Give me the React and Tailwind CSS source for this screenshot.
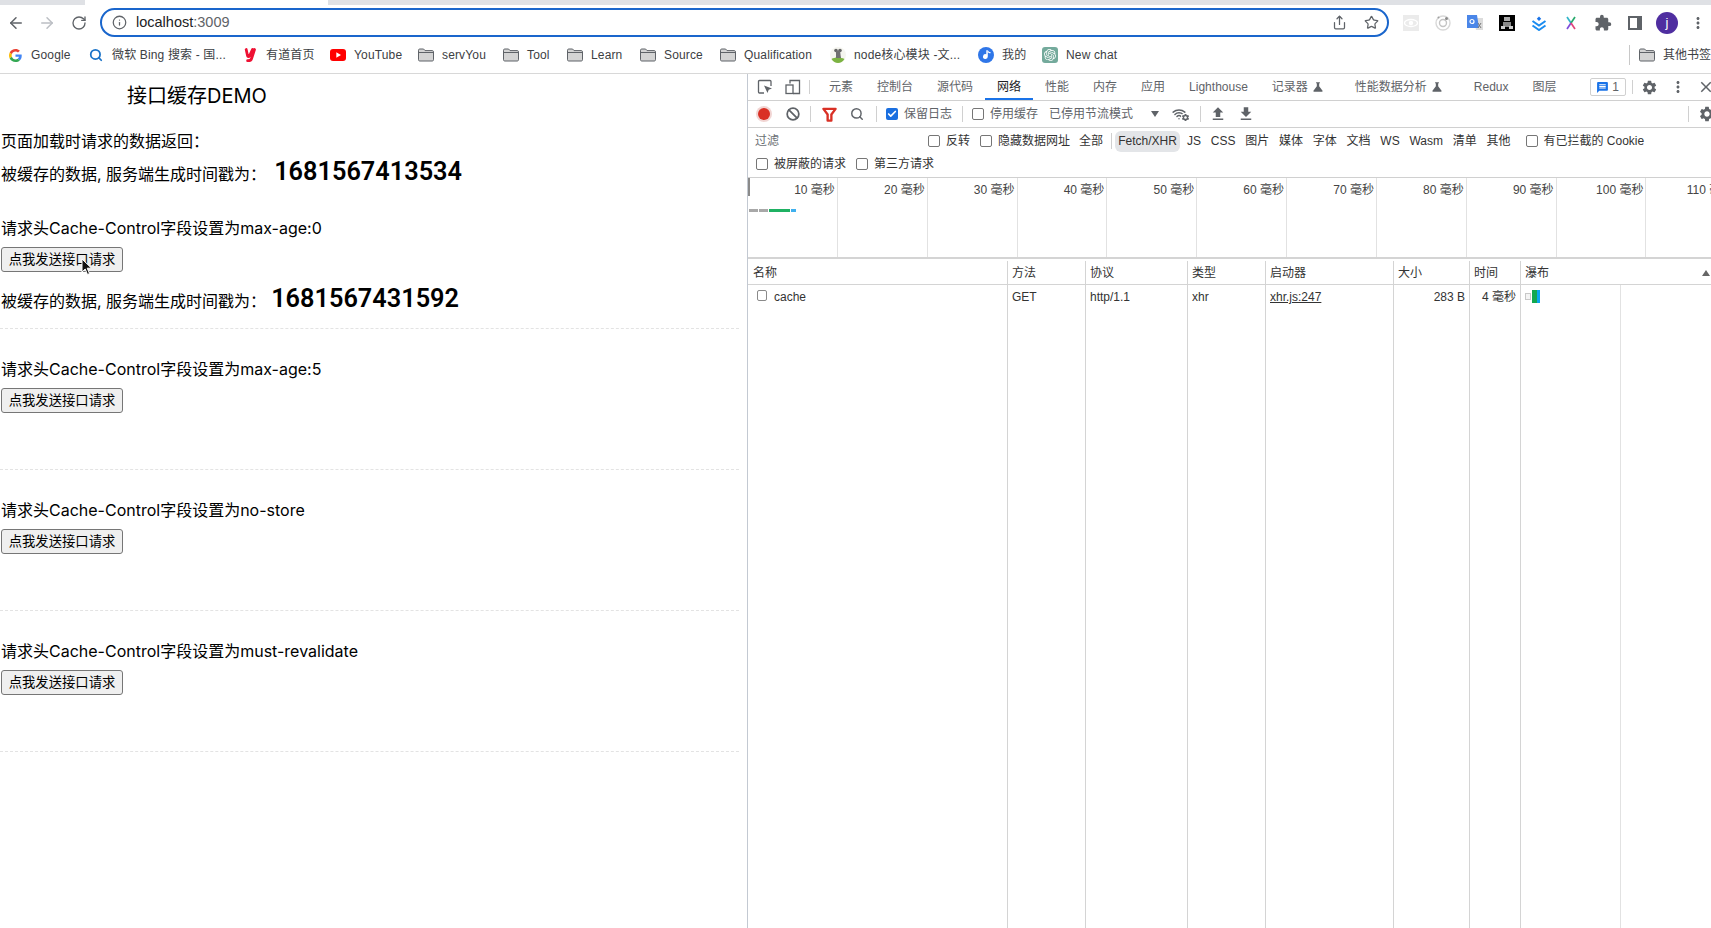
import React from 'react';
import { ArrowLeft, ArrowRight, RotateCw, Info, Share, Star, Search, Ban, Wifi, Check } from 'lucide-react';
import { MdExtension, MdSettings, MdMoreVert, MdClose, MdScience, MdMessage, MdFileUpload, MdFileDownload } from 'react-icons/md';
import { SiOpenai } from 'react-icons/si';

const sans = 'font-["Liberation_Sans","Noto_Sans_CJK_SC",sans-serif]';

function FolderIcon() {
  return (
    <svg viewBox="0 0 16 14" className="w-4 h-[14px] shrink-0">
      <path d="M.5 2.2C.5 1.5 1 1 1.7 1h3.9l1.4 1.6h7.3c.7 0 1.2.5 1.2 1.2v8c0 .7-.5 1.2-1.2 1.2H1.700C1 13 .5 12.500.5 11.800z" fill="#d4d4d4" stroke="#5f6368" />
      <path d="M.5 4.500h15" stroke="#5f6368" />
    </svg>
  );
}

function GoogleIcon() {
  return (
    <svg viewBox="0 0 48 48" className="w-[13px] h-[13px] ml-[2px] mr-[1px] shrink-0">
      <path fill="#EA4335" d="M24 9.500c3.500 0 6.700 1.200 9.200 3.600l6.900-6.900C35.900 2.400 30.500 0 24 0 14.600 0 6.500 5.400 2.600 13.200l8 6.200C12.500 13.700 17.800 9.500 24 9.500z" />
      <path fill="#4285F4" d="M47 24.500c0-1.600-.1-3.100-.4-4.500H24v9h12.900c-.6 3-2.200 5.500-4.700 7.200l7.700 6C44.400 37.600 47 31.600 47 24.500z" />
      <path fill="#FBBC05" d="M10.600 28.600c-.5-1.400-.8-3-.8-4.600s.3-3.200.8-4.600l-8-6.200C.9 16.500 0 20.100 0 24s.9 7.500 2.600 10.800l8-6.200z" />
      <path fill="#34A853" d="M24 48c6.500 0 11.900-2.100 15.900-5.800l-7.700-6c-2.200 1.500-5 2.300-8.200 2.300-6.200 0-11.500-4.200-13.400-9.900l-8 6.200C6.500 42.600 14.600 48 24 48z" />
    </svg>
  );
}

function YoutubeIcon() {
  return (
    <svg viewBox="0 0 16 12" className="w-4 h-3 shrink-0">
      <rect width="16" height="12" rx="3" fill="#f00" />
      <path d="M6.300 3.300v5.400L11 6z" fill="#fff" />
    </svg>
  );
}

function YoudaoIcon() {
  return (
    <svg viewBox="0 0 16 16" className="w-4 h-4 shrink-0">
      <path d="M4.200 2.500 5.600 9c.2.900 1.400.9 1.900 0l3-6.500M12.500 2.500 9.600 11.500c-.5 1.600-1.800 2.300-4 2.200" fill="none" stroke="#ee1133" strokeWidth="2.800" strokeLinecap="round" />
    </svg>
  );
}

function KoalaIcon() {
  return (
    <svg viewBox="0 0 16 16" className="w-4 h-4 shrink-0">
      <circle cx="8" cy="8" r="8" fill="#f5f5ef" />
      <path d="M1.500 12c3-2 9-2 13 0-1.500 2.500-4 4-6.500 4s-5-1.500-6.500-4z" fill="#7cb342" />
      <circle cx="6" cy="3.500" r="1.800" fill="#666" />
      <circle cx="10" cy="3.500" r="1.800" fill="#666" />
      <path d="M6 4h4l1 7H6z" fill="#707070" />
    </svg>
  );
}

function NoteIcon() {
  return (
    <svg viewBox="0 0 16 16" className="w-4 h-4 shrink-0">
      <circle cx="8" cy="8" r="8" fill="#2f76e8" />
      <path d="M9.800 3.200v6.300a2.400 2.400 0 1 1-1.500-2.200V3.200z" fill="#fff" />
      <path d="M9.800 3.200c.6 1.400 1.700 1.800 2.700 1.900v1.200c-1.200 0-2.200-.5-2.700-1.300z" fill="#fff" />
    </svg>
  );
}

function ChatIcon() {
  return (
    <span className="w-4 h-4 shrink-0 rounded-[3px] bg-[#74aa9c] flex items-center justify-center">
      <SiOpenai className="w-3 h-3 text-white" />
    </span>
  );
}

const bookmarks = [
  { label: 'Google', width: 'w-[81px]', icon: <GoogleIcon /> },
  { label: '微软 Bing 搜索 - 国...', width: 'w-[154px]', icon: <Search className="w-3.5 h-3.5 text-[#1a73c8] mx-px shrink-0" strokeWidth={3} /> },
  { label: '有道首页', width: 'w-[88px]', icon: <YoudaoIcon /> },
  { label: 'YouTube', width: 'w-[88px]', icon: <YoutubeIcon /> },
  { label: 'servYou', width: 'w-[85px]', icon: <FolderIcon /> },
  { label: 'Tool', width: 'w-[64px]', icon: <FolderIcon /> },
  { label: 'Learn', width: 'w-[73px]', icon: <FolderIcon /> },
  { label: 'Source', width: 'w-[80px]', icon: <FolderIcon /> },
  { label: 'Qualification', width: 'w-[110px]', icon: <FolderIcon /> },
  { label: 'node核心模块 -文...', width: 'w-[148px]', icon: <KoalaIcon /> },
  { label: '我的', width: 'w-[64px]', icon: <NoteIcon /> },
  { label: 'New chat', width: 'w-[80px]', icon: <ChatIcon /> },
];

function ExtensionIcons() {
  return (
    <div className="flex items-center ml-[6px]">
      <span className="w-8 flex justify-center">
        <svg viewBox="0 0 16 16" className="w-4 h-4">
          <rect width="16" height="16" fill="#ebebeb" />
          <ellipse cx="8" cy="8" rx="6.500" ry="3.500" fill="none" stroke="#fff" strokeWidth="1.300" />
          <circle cx="8" cy="8" r="2.200" fill="#fff" />
        </svg>
      </span>
      <span className="w-8 flex justify-center">
        <svg viewBox="0 0 16 16" className="w-4 h-4">
          <circle cx="8" cy="8" r="7" fill="none" stroke="#d8d8d8" strokeWidth="1.400" />
          <circle cx="8" cy="8" r="3.500" fill="none" stroke="#c4c4c4" strokeWidth="1.400" />
          <circle cx="11.500" cy="3.500" r="1.500" fill="#8a8a8a" />
          <circle cx="3.500" cy="2.500" r="1" fill="#a0a0a0" />
        </svg>
      </span>
      <span className="w-8 flex justify-center">
        <svg viewBox="0 0 16 16" className="w-4 h-4">
          <path d="M7 3h9v12H9z" fill="#dcdcdc" />
          <path d="M0 0h10l2 13H0z" fill="#4a86e8" />
          <circle cx="5" cy="6.500" r="2" fill="none" stroke="#fff" strokeWidth="1.200" />
          <path d="m11 8 3 5M14 8l-3 5" stroke="#777" />
        </svg>
      </span>
      <span className="w-8 flex justify-center">
        <svg viewBox="0 0 16 16" className="w-4 h-4">
          <rect width="16" height="16" fill="#000" />
          <rect x="5" y="2" width="6" height="4" fill="#aaa" />
          <rect x="4" y="7" width="8" height="5" fill="#888" />
          <rect x="2" y="11" width="4" height="3" fill="#ccc" />
          <rect x="10" y="11" width="4" height="3" fill="#ccc" />
        </svg>
      </span>
      <span className="w-8 flex justify-center">
        <svg viewBox="0 0 16 16" className="w-4 h-4">
          <path d="m8 1.500 2.200 2.200L8 5.900 5.800 3.700z" fill="#1a73e8" />
          <path d="m1.500 6 6.500 4.500L14.500 6M1.500 10.500 8 15l6.500-4.500" fill="none" stroke="#1a8cf0" strokeWidth="2" />
        </svg>
      </span>
      <span className="w-8 flex justify-center">
        <svg viewBox="0 0 16 16" className="w-4 h-4">
          <path d="M4 2l4 6" stroke="#31b5c9" strokeWidth="1.700" fill="none" />
          <path d="M12 2 8 8" stroke="#26a96c" strokeWidth="1.700" fill="none" />
          <path d="M8 8l-4 6" stroke="#7d4cdb" strokeWidth="1.700" fill="none" />
          <path d="M8 8l4 6" stroke="#e0457b" strokeWidth="1.700" fill="none" />
        </svg>
      </span>
      <span className="w-8 flex justify-center">
        <MdExtension className="w-[18px] h-[18px] text-[#5f6368]" />
      </span>
      <span className="w-8 flex justify-center">
        <span className="w-[14px] h-[14px] border-[2px] border-[#5f6368] border-r-[5px] block" />
      </span>
      <span className="w-8 flex justify-center">
        <span className={`w-[22px] h-[22px] rounded-full bg-[#4f2ea0] text-white text-[13px] flex items-center justify-center ${sans}`}>j</span>
      </span>
      <MdMoreVert className="w-[18px] h-[18px] text-[#5f6368] ml-[6px]" />
    </div>
  );
}

function BrowserChrome() {
  return (
    <div className={`shrink-0 ${sans} border-b border-[#d8d8d8]`}>
      <div className="h-[5px] bg-[#dfe1e5] flex">
        <div className="w-[85px] rounded-br-[6px] bg-[#dfe1e5]" />
        <div className="w-[243px] bg-white" />
      </div>
      <div className="h-[35px] flex items-center pl-[7px]">
        <span className="w-4 mr-[15px]"><ArrowLeft className="w-[18px] h-[18px] text-[#5f6368]" /></span>
        <span className="w-4 mr-[17px]"><ArrowRight className="w-[18px] h-[18px] text-[#bcbfc4]" /></span>
        <span className="w-4 mr-[13px]"><RotateCw className="w-[16px] h-[16px] text-[#5f6368]" /></span>
        <div className="w-[1289px] h-[29px] border-[2px] border-[#1a66cc] rounded-full flex items-center pl-[10px] pr-[7px]">
          <Info className="w-[15px] h-[15px] text-[#5f6368]" />
          <span className="ml-[9px] text-[14.5px] text-[#202124]">localhost<span className="text-[#5f6368]">:3009</span></span>
          <Share className="w-[15px] h-[15px] text-[#5f6368] ml-auto mr-[17px]" />
          <Star className="w-[15px] h-[15px] text-[#5f6368] mr-[1px]" />
        </div>
        <ExtensionIcons />
      </div>
      <div className="h-[33px] pb-[3px] flex items-center pl-[7px] text-[12px] text-[#3c4043] overflow-hidden whitespace-nowrap">
        {bookmarks.map((item) => (
          <div key={item.label} className={`${item.width} shrink-0 flex items-center gap-2`}>
            {item.icon}
            <span className="tracking-[0.15px]">{item.label}</span>
          </div>
        ))}
        <div className="ml-[507px] h-[20px] w-px bg-[#c8c8c8] shrink-0" />
        <span className="ml-[9px] shrink-0"><FolderIcon /></span>
        <span className="ml-2 shrink-0">其他书签</span>
      </div>
    </div>
  );
}

function DemoSection({ title, stamp }) {
  return (
    <div className="h-[141px] pt-[28px] pl-px border-b border-dashed border-[#e3e3e3]">
      <div className="h-6 leading-6 text-[16px]">{title}</div>
      <button className="relative block mt-[7px] w-[122px] h-[25px] bg-[#efefef] border border-[#767676] rounded-[3px] text-[13.330px] text-black">
        点我发送接口请求
      </button>
      {stamp && (
        <div className="mt-[8px] flex items-baseline text-[16px] h-[34px]">
          被缓存的数据, 服务端生成时间戳为：
          <span className="ml-[5px] text-[25.300px] font-semibold font-['Roboto','Liberation_Sans',sans-serif]">{stamp}</span>
        </div>
      )}
    </div>
  );
}

function PagePane() {
  return (
    <div className="w-[747px] shrink-0 text-black font-['Inter','Noto_Sans_CJK_SC',sans-serif] relative">
      <div className="h-[55px] pb-[11px] flex items-center pl-[127px] text-[20px]">接口缓存DEMO</div>
      <div className="h-6 leading-6 pl-px text-[16px]">页面加载时请求的数据返回：</div>
      <div className="h-[35px] pl-px flex items-baseline text-[16px]">
        被缓存的数据, 服务端生成时间戳为：
        <span className="ml-[8px] text-[25.300px] font-semibold font-['Roboto','Liberation_Sans',sans-serif]">1681567413534</span>
      </div>
      <div className="w-[739px]">
        <DemoSection title="请求头Cache-Control字段设置为max-age:0" stamp="1681567431592" />
        <DemoSection title="请求头Cache-Control字段设置为max-age:5" />
        <DemoSection title="请求头Cache-Control字段设置为no-store" />
        <DemoSection title="请求头Cache-Control字段设置为must-revalidate" />
      </div>
      {/* mouse pointer over the first button */}
      <svg viewBox="0 0 12 18" className="absolute left-[81px] top-[184px] w-[12px] h-[18px]">
        <path d="M1 1v13l3.200-3 2.300 5.500 2-1-2.300-5.300H10.500z" fill="#111" stroke="#fff" strokeWidth="1" />
      </svg>
    </div>
  );
}

const tabs = [
  { label: '元素' },
  { label: '控制台' },
  { label: '源代码' },
  { label: '网络', active: true },
  { label: '性能' },
  { label: '内存' },
  { label: '应用' },
  { label: 'Lighthouse' },
  { label: '记录器', flask: true },
  { label: '性能数据分析', flask: true },
  { label: 'Redux' },
  { label: '图层' },
];

function InspectIcon() {
  return (
    <svg viewBox="0 0 16 16" className="w-4 h-4">
      <path d="M7 14H2.500A1 1 0 0 1 1.500 13V2.500a1 1 0 0 1 1-1H13a1 1 0 0 1 1 1V7" fill="none" stroke="#5f6368" strokeWidth="1.300" />
      <path d="m7 6.500 8 3-3.300 1.200L10.500 14z" fill="#5f6368" />
    </svg>
  );
}

function DeviceIcon() {
  return (
    <svg viewBox="0 0 16 16" className="w-4 h-4">
      <path d="M5 4.500V1.500h9.500v13H8" fill="none" stroke="#5f6368" strokeWidth="1.300" />
      <rect x="1" y="6" width="7" height="8.500" fill="none" stroke="#5f6368" strokeWidth="1.300" />
    </svg>
  );
}

function TabBar() {
  return (
    <div className="h-[27px] shrink-0 flex items-stretch border-b border-[#d0d0d0] text-[12px] text-[#5f6368] overflow-hidden [&>*]:shrink-0">
      <span className="w-[32px] flex items-center justify-center ml-[1px]"><InspectIcon /></span>
      <span className="w-[24px] flex items-center justify-center mr-[-1px]"><DeviceIcon /></span>
      <span className="ml-[5px] my-[6px] w-px bg-[#d0d0d0]" />
      <span className="w-[7px]" />
      {tabs.map((tab) => (
        <div
          key={tab.label}
          className={`flex items-center pl-3 pr-3 whitespace-nowrap ${tab.flask ? 'pr-[15px]' : ''} ${tab.active ? 'text-[#202124] border-y-2 border-t-transparent border-b-[#1a73e8]' : ''}`}
        >
          {tab.label}
          {tab.flask && (
            <span className="w-5 flex justify-center"><MdScience className="w-[14px] h-[14px] text-[#5f6368]" /></span>
          )}
        </div>
      ))}
      <div className="ml-[21px] my-[4px] w-[36px] border border-[#d0d0d0] rounded-[2px] flex items-center justify-center gap-[3px]">
        <MdMessage className="w-[13px] h-[13px] text-[#1a73e8]" />
        <span>1</span>
      </div>
      <span className="ml-[6px] my-[6px] w-px bg-[#d0d0d0]" />
      <span className="ml-[8px] flex items-center"><MdSettings className="w-[17px] h-[17px] text-[#5f6368]" /></span>
      <span className="ml-[11px] flex items-center"><MdMoreVert className="w-[18px] h-[18px] text-[#5f6368]" /></span>
      <span className="ml-[10px] flex items-center"><MdClose className="w-[18px] h-[18px] text-[#5f6368]" /></span>
    </div>
  );
}

function Separator({ className }) {
  return <span className={`w-px h-[16px] bg-[#d0d0d0] shrink-0 ${className}`} />;
}

function Labeled({ children, className = '', checked }) {
  return (
    <label className={`flex items-center gap-[6px] whitespace-nowrap shrink-0 ${className}`}>
      {checked ? (
        <span className="w-3 h-3 rounded-[2px] bg-[#1a6fe0] flex items-center justify-center">
          <Check className="w-[10px] h-[10px] text-white" strokeWidth={4} />
        </span>
      ) : (
        <span className="w-3 h-3 rounded-[2px] border border-[#767676] bg-white" />
      )}
      {children}
    </label>
  );
}

function NetworkToolbar() {
  return (
    <div className="h-[27px] shrink-0 flex items-center border-b border-[#d0d0d0] text-[12px] text-[#5f6368] overflow-hidden [&>*]:shrink-0">
      <span className="w-[31px] flex justify-center pl-px">
        <span className="w-3 h-3 rounded-full bg-[#d93025] shadow-[0_0_0_2px_#f1d5d3]" />
      </span>
      <span className="w-[28px] flex justify-center"><Ban className="w-[14px] h-[14px] text-[#5f6368]" strokeWidth={3} /></span>
      <Separator className="ml-[3px]" />
      <span className="w-[36px] flex justify-center">
        <svg viewBox="0 0 16 16" className="w-[15px] h-[15px]">
          <path d="M1.500 2h13L10 8v6.500H6V8z" fill="#fff" stroke="#d93025" strokeWidth="2.500" strokeLinejoin="round" />
        </svg>
      </span>
      <span className="w-[20px] flex justify-center"><Search className="w-[14px] h-[14px] text-[#5f6368]" strokeWidth={2.500} /></span>
      <Separator className="ml-[9px]" />
      <Labeled checked className="ml-[9px]">保留日志</Labeled>
      <Separator className="ml-[10px]" />
      <Labeled className="ml-[9px]">停用缓存</Labeled>
      <span className="ml-[11px] whitespace-nowrap">已停用节流模式</span>
      <span className="ml-[18px] w-0 h-0 border-x-[4px] border-x-transparent border-t-[6px] border-t-[#5f6368]" />
      <span className="ml-[13px] w-[18px] relative">
        <Wifi className="w-[14px] h-[14px] text-[#5f6368]" strokeWidth={2.500} />
        <MdSettings className="absolute left-[9px] top-[6px] w-[9px] h-[9px] text-[#5f6368] bg-white rounded-full" />
      </span>
      <Separator className="ml-[10px]" />
      <MdFileUpload className="ml-[8px] w-[18px] h-[18px] text-[#5f6368]" />
      <MdFileDownload className="ml-[10px] w-[18px] h-[18px] text-[#5f6368]" />
      <Separator className="ml-auto" />
      <MdSettings className="ml-[9px] mr-[-5px] w-[18px] h-[18px] text-[#5f6368]" />
    </div>
  );
}

const filterTypes = ['JS', 'CSS', '图片', '媒体', '字体', '文档', 'WS', 'Wasm', '清单', '其他'];

function FilterBar() {
  return (
    <div className="h-[50px] shrink-0 border-b border-[#d0d0d0] text-[12px] text-[#333]">
      <div className="h-[26px] flex items-center pl-[7px]">
        <span className="w-[24px] text-[#6b6f74] whitespace-nowrap">过滤</span>
        <Labeled className="ml-[149px]">反转</Labeled>
        <Labeled className="ml-[10px]">隐藏数据网址</Labeled>
        <span className="ml-[9px] whitespace-nowrap">全部</span>
        <Separator className="ml-[8px]" />
        <span className="ml-[3px] w-[65px] h-[21px] rounded-[6px] bg-[#e3e5e8] flex items-center justify-center whitespace-nowrap">Fetch/XHR</span>
        <div className="ml-[7px] flex items-center gap-[9.750px] whitespace-nowrap">
          {filterTypes.map((type) => (
            <span key={type}>{type}</span>
          ))}
        </div>
        <Labeled className="ml-[15px]">有已拦截的 Cookie</Labeled>
      </div>
      <div className="h-[20px] flex items-center pl-2">
        <Labeled>被屏蔽的请求</Labeled>
        <Labeled className="ml-[10px]">第三方请求</Labeled>
      </div>
    </div>
  );
}

const ticks = [10, 20, 30, 40, 50, 60, 70, 80, 90, 100, 110];

function Timeline() {
  return (
    <div className="relative h-[81px] shrink-0 flex overflow-hidden border-b-2 border-[#d4d4d4] text-[12px] text-[#444]">
      {ticks.map((tick) => (
        <div key={tick} className="w-[89.850px] shrink-0 border-r border-[#e2e2e2] pr-[2px] pt-[3px] text-right whitespace-nowrap">
          {tick} 毫秒
        </div>
      ))}
      <div className="absolute left-0 top-0 w-[2px] h-[18px] bg-[#8a8a8a]" />
      <div className="absolute left-[1px] top-[31px] flex gap-[1px] h-[3px]">
        <span className="w-[9px] bg-[#a8a8a8]" />
        <span className="w-[9px] bg-[#a8a8a8]" />
        <span className="w-[21px] bg-[#1fb163]" />
        <span className="w-[5px] bg-[#3fb0ee]" />
      </div>
    </div>
  );
}

function RequestTable() {
  const cell = 'border-r border-[#d4d4d4] px-[4px]';
  return (
    <div className="flex-1 flex flex-col text-[12px] text-[#333] min-h-0">
      <div className="h-[26px] pt-[2px] shrink-0 grid grid-cols-[260px_78px_102px_78px_128px_76px_51px_1fr] items-stretch border-b border-[#d4d4d4]">
        <div className={`${cell} flex items-center pl-[5px]`}>名称</div>
        <div className={`${cell} flex items-center`}>方法</div>
        <div className={`${cell} flex items-center`}>协议</div>
        <div className={`${cell} flex items-center`}>类型</div>
        <div className={`${cell} flex items-center`}>启动器</div>
        <div className={`${cell} flex items-center`}>大小</div>
        <div className={`${cell} flex items-center`}>时间</div>
        <div className="flex items-center justify-between pl-[4px] pr-[1px]">
          瀑布
          <span className="w-0 h-0 border-x-[4px] border-x-transparent border-b-[6px] border-b-[#666]" />
        </div>
      </div>
      <div className="flex-1 grid grid-cols-[260px_78px_102px_78px_128px_76px_51px_1fr]">
        <div className={`${cell} flex gap-[7px] items-start pt-[3px] pl-[9px]`}>
          <span className="w-[10px] h-[11px] mt-[2px] rounded-[2px] border border-[#8a8a8a] bg-white" />
          <span>cache</span>
        </div>
        <div className={`${cell} pt-[3px]`}>GET</div>
        <div className={`${cell} pt-[3px]`}>http/1.1</div>
        <div className={`${cell} pt-[3px]`}>xhr</div>
        <div className={`${cell} pt-[3px] underline`}>xhr.js:247</div>
        <div className={`${cell} pt-[3px] text-right`}>283 B</div>
        <div className={`${cell} pt-[3px] text-right`}>4 毫秒</div>
        <div className="flex">
          <div className="w-[100px] border-r border-[#e2e2e2] pl-[4px] pt-[5px] flex items-start">
            <span className="w-[6px] h-[7px] mt-[3px] border border-[#c8c8c8] bg-[#f4f4f4]" />
            <span className="ml-[1px] w-[5px] h-[13px] bg-[#12a84f]" />
            <span className="w-[3px] h-[13px] bg-[#0aa5ec]" />
          </div>
        </div>
      </div>
    </div>
  );
}

function DevToolsPane() {
  return (
    <div className={`flex-1 min-w-0 flex flex-col border-l border-[#c3c9d2] ${sans}`}>
      <TabBar />
      <NetworkToolbar />
      <FilterBar />
      <Timeline />
      <RequestTable />
    </div>
  );
}

export default function App() {
  return (
    <div className="w-[1711px] h-[928px] bg-white flex flex-col overflow-hidden">
      <BrowserChrome />
      <div className="flex-1 flex min-h-0">
        <PagePane />
        <DevToolsPane />
      </div>
    </div>
  );
}
